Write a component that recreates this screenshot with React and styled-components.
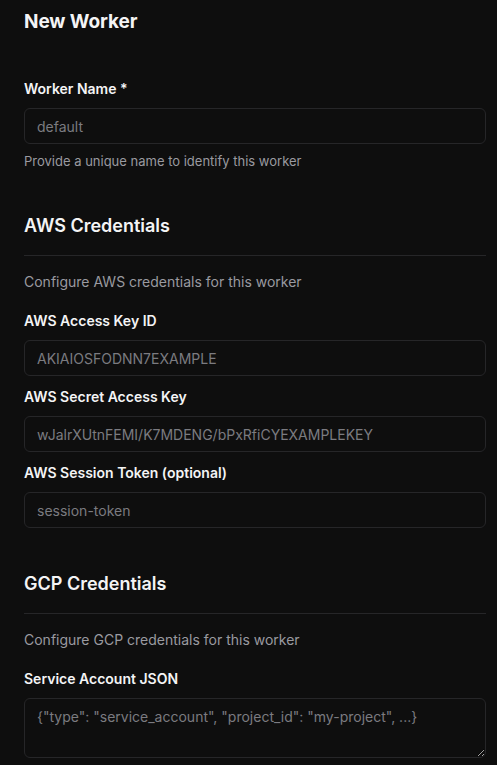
import React from 'react'
import styled, { createGlobalStyle } from 'styled-components'

const GlobalStyle = createGlobalStyle`
  html, body {
    margin: 0;
    padding: 0;
    background: #0e0e0e;
  }
  body {
    font-family: Inter, "Noto Sans", sans-serif;
    color: #f4f4f5;
    -webkit-font-smoothing: antialiased;
  }
  * {
    box-sizing: border-box;
  }
`

const fields = {
  aws: [
    { label: 'AWS Access Key ID', placeholder: 'AKIAIOSFODNN7EXAMPLE' },
    { label: 'AWS Secret Access Key', placeholder: 'wJalrXUtnFEMI/K7MDENG/bPxRfiCYEXAMPLEKEY' },
    { label: 'AWS Session Token (optional)', placeholder: 'session-token' }
  ]
}

export default () => (
  <>
    <GlobalStyle />
    <Page>
      <Title>New Worker</Title>

      <Field>
        <Label>Worker Name *</Label>
        <Input placeholder='default' />
        <Hint>Provide a unique name to identify this worker</Hint>
      </Field>

      <Section>
        <SectionTitle>AWS Credentials</SectionTitle>
        <Divider />
        <Description>Configure AWS credentials for this worker</Description>
        <Fields>
          {fields.aws.map(f => (
            <Field key={f.label}>
              <Label>{f.label}</Label>
              <Input placeholder={f.placeholder} />
            </Field>
          ))}
        </Fields>
      </Section>

      <Section>
        <SectionTitle>GCP Credentials</SectionTitle>
        <Divider />
        <Description>Configure GCP credentials for this worker</Description>
        <Fields>
          <Field>
            <Label>Service Account JSON</Label>
            <TextArea
              placeholder='{"type": "service_account", "project_id": "my-project", ...}'
            />
          </Field>
        </Fields>
      </Section>
    </Page>
  </>
)

const Page = styled.div`
  display: flex;
  flex-direction: column;
  padding: 8px 11px 0 24px;
  min-height: 765px;
`

const Title = styled.h1`
  margin: 0 0 43px;
  font-size: 19px;
  line-height: 28px;
  font-weight: 700;
  letter-spacing: -0.1px;
`

const Field = styled.div`
  display: flex;
  flex-direction: column;
`

const Fields = styled.div`
  display: flex;
  flex-direction: column;
  gap: 11px;
`

const Label = styled.label`
  font-size: 14px;
  line-height: 20px;
  font-weight: 600;
  color: #f4f4f5;
  margin-bottom: 9px;
`

const inputBase = `
  width: 100%;
  background: #0e0e0e;
  border: 1px solid #262628;
  border-radius: 6px;
  padding: 0 12px;
  font-family: Inter, "Noto Sans", sans-serif;
  font-size: 14px;
  color: #f4f4f5;
  outline: none;
  &::placeholder {
    color: #7b7b80;
  }
`

const Input = styled.input`
  ${inputBase}
  height: 36px;
`

const TextArea = styled.textarea`
  ${inputBase}
  height: 60px;
  padding: 8px 12px;
  line-height: 20px;
  resize: vertical;
  display: block;
`

const Hint = styled.p`
  margin: 8px 0 0;
  font-size: 13px;
  line-height: 18px;
  color: #9a9aa0;
`

const Section = styled.section`
  display: flex;
  flex-direction: column;
  margin-top: 42px;
`

const SectionTitle = styled.h2`
  margin: 0;
  font-size: 18px;
  line-height: 28px;
  font-weight: 600;
`

const Divider = styled.hr`
  border: none;
  height: 1px;
  background: #262628;
  margin: 15px 0 16px;
`

const Description = styled.p`
  margin: 0 0 19px;
  font-size: 14px;
  line-height: 20px;
  color: #9a9aa0;
`
